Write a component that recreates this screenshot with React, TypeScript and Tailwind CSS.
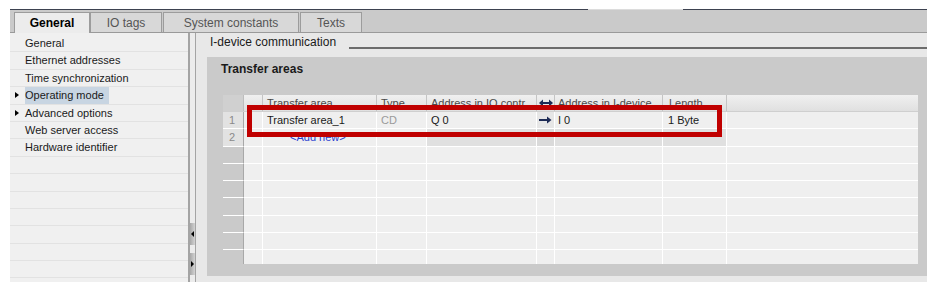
import React from "react";

const COLS = [21, 19, 114, 50, 110, 18, 108, 64];

function RightArrow() {
  return (
    <svg width="13" height="8" viewBox="0 0 13 8">
      <path d="M0 4 H10" stroke="#1c2a55" strokeWidth="2" />
      <path d="M8 0.5 L12.5 4 L8 7.5 Z" fill="#1c2a55" />
    </svg>
  );
}

function DoubleArrow() {
  return (
    <svg width="14" height="8" viewBox="0 0 14 8">
      <path d="M3 4 H11" stroke="#1c2a55" strokeWidth="2" />
      <path d="M4 0.5 L0 4 L4 7.5 Z" fill="#1c2a55" />
      <path d="M10 0.5 L14 4 L10 7.5 Z" fill="#1c2a55" />
    </svg>
  );
}

function Tri({ dir = "right" }: { dir?: "right" | "left" }) {
  return dir === "right" ? (
    <div className="w-0 h-0 border-y-[3.5px] border-y-transparent border-l-[4px] border-l-black" />
  ) : (
    <div className="w-0 h-0 border-y-[3px] border-y-transparent border-r-[3px] border-r-black" />
  );
}

const navItems: { label: string; arrow?: boolean; active?: boolean }[] = [
  { label: "General" },
  { label: "Ethernet addresses" },
  { label: "Time synchronization" },
  { label: "Operating mode", arrow: true, active: true },
  { label: "Advanced options", arrow: true },
  { label: "Web server access" },
  { label: "Hardware identifier" },
];

function Tab({ label, active, w }: { label: string; active?: boolean; w: string }) {
  return (
    <div
      className={
        "h-[20px] flex items-center justify-center border border-[#9c9c9c] border-b-0 text-[12px] " +
        w +
        (active
          ? " bg-[#ececec] font-bold text-black h-[21px] -mb-px"
          : " bg-[#d8d8d8] text-[#555]")
      }
    >
      {label}
    </div>
  );
}

export default function App() {
  const emptyRows = Array.from({ length: 7 });
  return (
    <div className="w-[936px] h-[282px] bg-white overflow-hidden font-['Liberation_Sans',Arial,sans-serif] pt-[9px] pl-[10px]">
      <div className="w-[917px] h-[273px] flex flex-col">
        {/* top line */}
        <div className="flex h-px shrink-0">
          <div className="w-[578px] bg-[#3d4250]" />
          <div className="w-[95px] bg-[#dcdcdc]" />
          <div className="flex-1 bg-[#3d4250]" />
        </div>
        {/* tab bar */}
        <div className="h-[23px] shrink-0 bg-[#cacaca] border-b border-[#9a9a9a] flex items-end pl-[4px]">
          <Tab label="General" active w="w-[76px]" />
          <Tab label="IO tags" w="w-[72px]" />
          <div className="w-[1px]" />
          <Tab label="System constants" w="w-[136px]" />
          <div className="w-[1px]" />
          <Tab label="Texts" w="w-[62px]" />
        </div>
        {/* body */}
        <div className="flex-1 flex min-h-0">
          {/* nav */}
          <div className="w-[178px] bg-[#f0f0f0] pt-[2px] flex flex-col overflow-hidden">
            {Array.from({ length: 14 }).map((_, i) => {
              const it = navItems[i];
              return (
                <div key={i} className="h-[17.4px] shrink-0 border-b border-[#e2e2e2] flex items-center relative">
                  {it && (
                    <>
                      <div className="w-[15px] flex justify-end pr-[6px]">
                        {it.arrow && <Tri />}
                      </div>
                      <div
                        className={
                          "h-full flex items-center text-[11px] text-[#1a1a1a] pl-[0px] pr-[5px] " +
                          (it.active ? "bg-[#c8d5e2]" : "")
                        }
                      >
                        {it.label}
                      </div>
                    </>
                  )}
                </div>
              );
            })}
          </div>
          {/* splitter */}
          <div className="w-[8px] bg-[#ececec] border-l-2 border-r border-[#a4a4a4] flex flex-col pt-[190px]">
            <div className="h-[22px] bg-gradient-to-r from-[#a8a8a8] to-[#d4d4d4] flex items-center justify-center">
              <Tri dir="left" />
            </div>
            <div className="h-[8px]" />
            <div className="h-[22px] bg-gradient-to-r from-[#a8a8a8] to-[#d4d4d4] flex items-center justify-center">
              <div className="w-0 h-0 border-y-[3px] border-y-transparent border-l-[3px] border-l-black" />
            </div>
          </div>
          {/* right panel */}
          <div className="flex-1 bg-[#e8e8e8] flex flex-col min-w-0">
            <div className="h-[24px] shrink-0 flex items-start pl-[14px] pt-[2px]">
              <span className="text-[12px] text-[#1a1a1a] leading-[15px]">I-device communication</span>
              <div className="flex-1 ml-[13px] mt-[12px] h-[2px] bg-[#6c6c6c]" />
            </div>
            <div className="ml-[11px] h-[219px] bg-[#cacaca] flex flex-col">
              <div className="h-[38px] pl-[14px] pt-[4px] text-[12px] font-bold text-[#1a1a1a] leading-[16px]">
                Transfer areas
              </div>
              {/* table */}
              <div className="ml-[16px] w-[695px] relative">
                {/* header */}
                <div className="flex h-[17px] border-b border-[#cfcfcf] text-[11px] text-[#4a4a4a]">
                  <div className="bg-[#d0d0d0] border-r border-[#bdbdbd]" style={{ width: COLS[0] }} />
                  <div className="bg-gradient-to-b from-[#f0f0f0] to-[#e0e0e0] border-r border-[#c4c4c4]" style={{ width: COLS[1] }} />
                  {[
                    ["Transfer area", 2],
                    ["Type", 3],
                    ["Address in IO contr", 4],
                  ].map(([t, i]) => (
                    <div
                      key={t as string}
                      className="bg-gradient-to-b from-[#f0f0f0] to-[#e0e0e0] border-r border-[#c4c4c4] flex items-center pl-[4px] whitespace-nowrap overflow-hidden"
                      style={{ width: COLS[i as number] }}
                    >
                      {t}
                    </div>
                  ))}
                  <div className="bg-gradient-to-b from-[#f0f0f0] to-[#e0e0e0] border-r border-[#c4c4c4] flex items-center justify-center" style={{ width: COLS[5] }}>
                    <DoubleArrow />
                  </div>
                  <div className="bg-gradient-to-b from-[#f0f0f0] to-[#e0e0e0] border-r border-[#c4c4c4] flex items-center pl-[3px] whitespace-nowrap overflow-hidden" style={{ width: COLS[6] }}>
                    Address in I-device
                  </div>
                  <div className="bg-gradient-to-b from-[#f0f0f0] to-[#e0e0e0] border-r border-[#c4c4c4] flex items-center pl-[6px]" style={{ width: COLS[7] }}>
                    Length
                  </div>
                  <div className="flex-1 bg-gradient-to-b from-[#f0f0f0] to-[#e0e0e0]" />
                </div>
                {/* body */}
                <div className="h-[152px] overflow-hidden flex flex-col text-[11px]">
                  {/* row 1 */}
                  <div className="flex h-[17.3px] shrink-0">
                    <div className="bg-[#e2e2e2] border-r border-[#a8a8a8] border-b border-b-white flex items-center pl-[6px] text-[#8a8a8a]" style={{ width: COLS[0] }}>1</div>
                    <div className="bg-[#efefef] border-r border-b border-white" style={{ width: COLS[1] }} />
                    <div className="bg-[#efefef] border-r border-b border-white flex items-center pl-[4px] text-[#1a1a1a] whitespace-nowrap" style={{ width: COLS[2] }}>Transfer area_1</div>
                    <div className="bg-[#efefef] border-r border-b border-white flex items-center pl-[4px] text-[#9a9a9a]" style={{ width: COLS[3] }}>CD</div>
                    <div className="bg-[#efefef] border-r border-b border-white flex items-center pl-[4px] text-[#1a1a1a]" style={{ width: COLS[4] }}>Q 0</div>
                    <div className="bg-[#e6e6e6] border-r border-b border-white flex items-center justify-center" style={{ width: COLS[5] }}><RightArrow /></div>
                    <div className="bg-[#efefef] border-r border-b border-white flex items-center pl-[3px] text-[#1a1a1a]" style={{ width: COLS[6] }}>I 0</div>
                    <div className="bg-[#efefef] border-r border-b border-white flex items-center pl-[5px] text-[#1a1a1a]" style={{ width: COLS[7] }}>1 Byte</div>
                    <div className="flex-1 bg-[#efefef] border-b border-white" />
                  </div>
                  {/* row 2 */}
                  <div className="flex h-[17.3px] shrink-0">
                    <div className="bg-[#e2e2e2] border-r border-[#a8a8a8] border-b border-b-white flex items-center pl-[6px] text-[#8a8a8a]" style={{ width: COLS[0] }}>2</div>
                    <div className="bg-[#efefef] border-r border-b border-white" style={{ width: COLS[1] }} />
                    <div className="bg-[#efefef] border-r border-b border-white flex items-center pl-[27px] text-[#2b3fcf] whitespace-nowrap" style={{ width: COLS[2] }}>&lt;Add new&gt;</div>
                    <div className="bg-[#efefef] border-r border-b border-white" style={{ width: COLS[3] }} />
                    <div className="bg-[#e0e0e0] border-r border-b border-white" style={{ width: COLS[4] }} />
                    <div className="bg-[#dadada] border-r border-b border-white" style={{ width: COLS[5] }} />
                    <div className="bg-[#e0e0e0] border-r border-b border-white" style={{ width: COLS[6] }} />
                    <div className="bg-[#e0e0e0] border-r border-b border-white" style={{ width: COLS[7] }} />
                    <div className="flex-1 bg-[#efefef] border-b border-white" />
                  </div>
                  {emptyRows.map((_, r) => (
                    <div key={r} className="flex h-[17.3px] shrink-0">
                      <div className="bg-[#cacaca] border-r border-[#a8a8a8] border-b border-b-white" style={{ width: COLS[0] }} />
                      {COLS.slice(1).map((w, i) => (
                        <div key={i} className="bg-[#efefef] border-r border-b border-white" style={{ width: w }} />
                      ))}
                      <div className="flex-1 bg-[#efefef] border-b border-white" />
                    </div>
                  ))}
                </div>
                {/* red annotation box */}
                <div className="absolute left-[24px] top-[10px] w-[475px] h-[32px] border-[5px] border-[#c00000]" />
              </div>
            </div>
            <div className="flex-1" />
          </div>
        </div>
      </div>
    </div>
  );
}
